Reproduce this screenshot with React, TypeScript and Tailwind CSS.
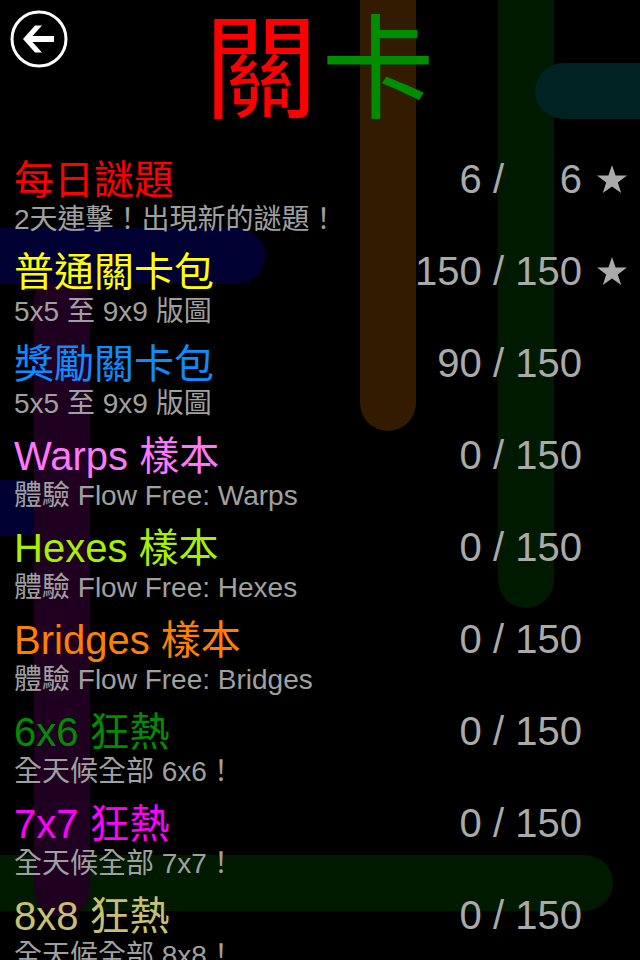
type Row = { title: string; color: string; sub: string; left: string; right: string; star?: boolean };

const rows: Row[] = [
  { title: "每日謎題", color: "text-[#ff0000]", sub: "2天連擊\uFF01出現新的謎題\uFF01", left: "6 /", right: "6", star: true },
  { title: "普通關卡包", color: "text-[#ffff00]", sub: "5x5 至 9x9 版圖", left: "150 /", right: "150", star: true },
  { title: "獎勵關卡包", color: "text-[#0d8cff]", sub: "5x5 至 9x9 版圖", left: "90 /", right: "150" },
  { title: "Warps 樣本", color: "text-[#ff77ff]", sub: "體驗 Flow Free: Warps", left: "0 /", right: "150" },
  { title: "Hexes 樣本", color: "text-[#a6f000]", sub: "體驗 Flow Free: Hexes", left: "0 /", right: "150" },
  { title: "Bridges 樣本", color: "text-[#ff8000]", sub: "體驗 Flow Free: Bridges", left: "0 /", right: "150" },
  { title: "6x6 狂熱", color: "text-[#008d00]", sub: "全天候全部 6x6\uFF01", left: "0 /", right: "150" },
  { title: "7x7 狂熱", color: "text-[#ff00ff]", sub: "全天候全部 7x7\uFF01", left: "0 /", right: "150" },
  { title: "8x8 狂熱", color: "text-[#c8c070]", sub: "全天候全部 8x8\uFF01", left: "0 /", right: "150" },
];

function Pipes() {
  return (
    <svg width="640" height="960" viewBox="0 0 640 960" className="absolute inset-0" fill="none" strokeWidth="56" strokeLinecap="round">
      <path d="M388 -40V403" stroke="#331b00" />
      <path d="M526 -40V580" stroke="#001a00" />
      <path d="M563 91H700" stroke="#002222" />
      <path d="M-40 508H60" stroke="#000033" />
      <path d="M-40 883H585" stroke="#001a00" />
      <path d="M62 302V889" stroke="#1f0020" />
      <path d="M-40 256H237" stroke="#000033" />
    </svg>
  );
}

function BackIcon() {
  return (
    <svg width="58" height="58" viewBox="0 0 58 58">
      <circle cx="29" cy="29" r="27" fill="none" stroke="#ffffff" strokeWidth="3" />
      <polygon
        fill="#ffffff"
        points="13,29 25,15.5 32,15.5 22.5,26 44,26 44,32 22.5,32 32,42.5 25,42.5"
      />
    </svg>
  );
}

function Star() {
  return (
    <svg width="32" height="30" viewBox="0 0 32 30" className="mt-[7px]">
      <polygon fill="#aaaaaa" points="16,1 19.6,11.6 31,11.6 21.8,18.4 25.2,29 16,22.6 6.8,29 10.2,18.4 1,11.6 12.4,11.6" />
    </svg>
  );
}

export default function App() {
  return (
    <div className="relative w-[640px] h-[960px] overflow-hidden bg-black font-['Liberation_Sans','Noto_Sans_CJK_TC',sans-serif]">
      <Pipes />
      <div className="relative flex flex-col">
        <header className="grid grid-cols-[1fr_auto_1fr] h-[157px]">
          <div className="pl-[10px] pt-[10px]">
            <BackIcon />
          </div>
          <h1 className="pl-[3px] text-[113px] leading-[140px] tracking-[4px] font-normal whitespace-nowrap">
            <span className="text-[#ff0000]">關</span>
            <span className="text-[#008d00]">卡</span>
          </h1>
          <div />
        </header>
        <div className="flex flex-col">
          {rows.map((r) => (
            <div key={r.title} className="flex justify-between h-[92px] pl-[14px] pr-[12px]">
              <div className="flex flex-col">
                <div className={`text-[40px] leading-[46px] whitespace-nowrap ${r.color}`}>{r.title}</div>
                <div className="text-[28px] leading-[34px] text-[#a0a0a0] whitespace-nowrap">{r.sub}</div>
              </div>
              <div className="flex items-start text-[40px] leading-[44px] text-[#aaaaaa]">
                <span>{r.left}</span>
                <span className="w-[78px] text-right">{r.right}</span>
                <div className="w-[32px] ml-[14px]">{r.star ? <Star /> : null}</div>
              </div>
            </div>
          ))}
        </div>
      </div>
    </div>
  );
}
